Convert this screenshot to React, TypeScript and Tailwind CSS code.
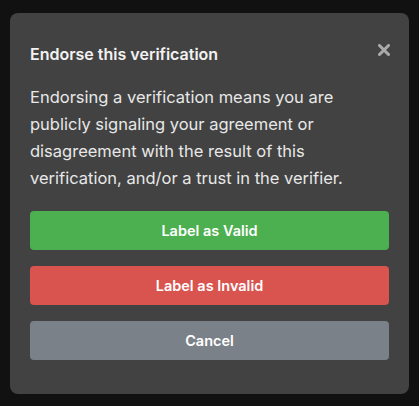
export default function App() {
  return (
    <div className="min-h-[406px] bg-[#111111] px-[10px] pt-[13px] pb-[12px]" style={{ fontFamily: 'Inter, "Liberation Sans", sans-serif' }}>
      <div className="rounded-lg bg-[#424242] px-5 pt-[27px] pb-[34px]">
        <div className="flex items-start justify-between">
          <h2 className="text-[16px] font-semibold leading-[28px] text-[#f2f2f2]">Endorse this verification</h2>
          <button className="mt-[4px] mr-[-1px] text-[#ababab]" aria-label="Close">
            <svg width="12" height="12" viewBox="0 0 12 12">
              <path d="M1.5 1.5L10.5 10.5M10.5 1.5L1.5 10.5" stroke="currentColor" strokeWidth="3" strokeLinecap="round" />
            </svg>
          </button>
        </div>
        <p className="mt-[16px] text-[16.5px] leading-[27px] text-[#e8e8e8]">
          Endorsing a verification means you are publicly signaling your agreement or disagreement with the result of this verification, and/or a trust in the verifier.
        </p>
        <div className="mt-[19px] flex flex-col gap-4">
          <button className="h-[39px] rounded bg-[#4caf50] text-[14.5px] font-semibold text-white">Label as Valid</button>
          <button className="h-[39px] rounded bg-[#d9534f] text-[14.5px] font-semibold text-white">Label as Invalid</button>
          <button className="h-[39px] rounded bg-[#7b8188] text-[14.5px] font-semibold text-white">Cancel</button>
        </div>
      </div>
    </div>
  )
}
